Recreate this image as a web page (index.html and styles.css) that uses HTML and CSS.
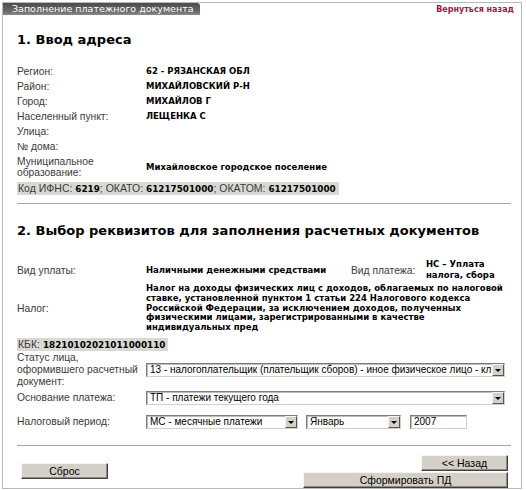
FILE: index.html
```html
<!DOCTYPE html>
<html lang="ru">
<head>
<meta charset="utf-8">
<title>Заполнение платежного документа</title>
<link rel="stylesheet" href="styles.css">
</head>
<body>
<div class="frame">
  <div class="topbar">
    <div class="tab">Заполнение платежного документа</div>
    <a class="back" href="#">Вернуться назад</a>
  </div>
  <div class="content">
    <h2 class="h-first">1. Ввод адреса</h2>
    <div class="addr">
      <div class="lbl">Регион:</div><div class="val">62 - РЯЗАНСКАЯ ОБЛ</div>
      <div class="lbl">Район:</div><div class="val">МИХАЙЛОВСКИЙ Р-Н</div>
      <div class="lbl">Город:</div><div class="val">МИХАЙЛОВ Г</div>
      <div class="lbl">Населенный пункт:</div><div class="val">ЛЕЩЕНКА С</div>
      <div class="lbl">Улица:</div><div class="val"></div>
      <div class="lbl">№ дома:</div><div class="val"></div>
      <div class="lbl multi">Муниципальное<br>образование:</div><div class="val multi-val">Михайловское городское поселение</div>
    </div>
    <div class="codebar">Код ИФНС: <b>6219</b>; ОКАТО: <b>61217501000</b>; ОКАТОМ: <b>61217501000</b></div>
    <div class="rule rule-1"></div>

    <h2 class="h-second">2. Выбор реквизитов для заполнения расчетных документов</h2>
    <div class="pay">
      <div class="lbl">Вид уплаты:</div>
      <div class="val">Наличными денежными средствами</div>
      <div class="lbl">Вид платежа:</div>
      <div class="val two">НС – Уплата<br>налога, сбора</div>
    </div>
    <div class="tax">
      <div class="lbl">Налог:</div>
      <div class="val tax-text">Налог на доходы физических лиц с доходов, облагаемых по налоговой ставке, установленной пунктом 1 статьи 224 Налогового кодекса Российской Федерации, за исключением доходов, полученных физическими лицами, зарегистрированными в качестве индивидуальных пред</div>
    </div>
    <div class="codebar kbk">КБК: <b>18210102021011000110</b></div>

    <div class="form">
      <div class="frow status">
        <div class="lbl three">Статус лица,<br>оформившего расчетный<br>документ:</div>
        <div class="select full"><span class="stext">13 - налогоплательщик (плательщик сборов) - иное физическое лицо - кл</span><span class="arrow"><i></i></span></div>
      </div>
      <div class="frow basis">
        <div class="lbl">Основание платежа:</div>
        <div class="select full"><span class="stext">ТП - платежи текущего года</span><span class="arrow"><i></i></span></div>
      </div>
      <div class="frow period">
        <div class="lbl">Налоговый период:</div>
        <div class="period-ctrls">
          <div class="select s-type"><span class="stext">МС - месячные платежи</span><span class="arrow"><i></i></span></div>
          <div class="select s-month"><span class="stext">Январь</span><span class="arrow"><i></i></span></div>
          <div class="select s-year"><span class="stext">2007</span></div>
        </div>
      </div>
    </div>
    <div class="rule rule-2"></div>

    <div class="actions">
      <div class="btn btn-reset">Сброс</div>
      <div class="right-btns">
        <div class="btn btn-back">&lt;&lt; Назад</div>
        <div class="btn btn-make">Сформировать ПД</div>
      </div>
    </div>
  </div>
</div>
</body>
</html>
```
FILE: styles.css
```css
* { box-sizing: border-box; }
body { margin: 0; background: #fff; font-family: "Liberation Sans", Arial, sans-serif; color: #000; }

.frame {
  margin: 2px 0 0 2px;
  width: 520px;
  height: 487px;
  border: 1px solid #b9b9b9;
}

.topbar { display: flex; justify-content: space-between; align-items: flex-start; height: 12px; }
.tab {
  width: 197px;
  height: 12px;
  padding-left: 9px;
  background: linear-gradient(#4c4c4c, #6a6a6a 70%, #8a8a8a);
  border-top-right-radius: 3px;
  color: #fff;
  font: 9.5px/12px "DejaVu Sans", sans-serif;
  white-space: nowrap;
}
.back {
  margin: 1px 7px 0 0;
  color: #a3184b;
  font: bold 8px/12px "DejaVu Sans", sans-serif;
  text-decoration: none;
}

.content { padding: 0 10px 0 14px; }

h2 { margin: 0; font: bold 13px/16px "DejaVu Sans", sans-serif; color: #000; }
.h-first { margin-top: 17px; }
.h-second { margin-top: 19px; }

.lbl { font-size: 10.3px; color: #3a3a3a; }
.val { font: bold 8.5px "DejaVu Sans", sans-serif; color: #000; }

.addr {
  display: grid;
  grid-template-columns: 129px 1fr;
  align-items: center;
  margin-top: 16px;
  line-height: 15px;
}
.addr .val { line-height: 15px; min-height: 15px; }
.addr .multi { line-height: 11px; padding: 2px 0 3px; }

.codebar {
  display: inline-block;
  height: 13px;
  padding: 0 3px 0 1px;
  margin-top: 1px;
  background: #d9d9d3;
  font-size: 10.5px;
  line-height: 13px;
  color: #3a3a3a;
  vertical-align: top;
}
.codebar b { font: bold 8.8px "DejaVu Sans", sans-serif; color: #000; }

.rule { height: 0; border-top: 1px solid #a6a6a6; }
.rule-1 { margin-top: 4px; }
.rule-2 { margin-top: 16px; }

.pay {
  display: grid;
  grid-template-columns: 129px 205px 75px 1fr;
  align-items: center;
  margin-top: 19px;
  height: 24px;
}
.pay .two { line-height: 11.5px; }

.tax {
  display: grid;
  grid-template-columns: 129px 1fr;
  align-items: center;
  margin-top: 2px;
}
.tax-text { line-height: 9.8px; }

.kbk { margin-top: 5px; }

.form { margin-top: 1px; }
.frow { display: grid; grid-template-columns: 129px 1fr; align-items: center; }
.three { line-height: 12px; }
.basis { margin-top: 3px; }
.period { margin-top: 10px; }

.select {
  display: flex;
  height: 14px;
  background: #fff;
  border: 1px solid;
  border-color: #7b7b7b #d4d0c8 #d4d0c8 #7b7b7b;
  box-shadow: inset 1px 1px 0 #bdbdbd;
  overflow: hidden;
}
.full { width: 359px; }
.stext {
  flex: 1;
  min-width: 0;
  padding-left: 3px;
  font-size: 10px;
  line-height: 12px;
  white-space: nowrap;
  overflow: hidden;
  color: #000;
}
.arrow {
  flex: none;
  width: 12px;
  height: 12px;
  background: #d4d0c8;
  border: 1px solid;
  border-color: #f4f4f4 #555 #555 #f4f4f4;
  display: flex;
  align-items: center;
  justify-content: center;
}
.arrow i {
  width: 0;
  height: 0;
  border-left: 3px solid transparent;
  border-right: 3px solid transparent;
  border-top: 3px solid #000;
  margin-top: 1px;
}

.period-ctrls { display: flex; }
.s-type { width: 152px; }
.s-month { width: 95px; margin-left: 8px; }
.s-year { width: 57px; margin-left: 9px; }

.actions { display: flex; justify-content: space-between; align-items: flex-start; }
.btn {
  height: 16px;
  background: #d4d0c8;
  border: 1px solid;
  border-color: #f4f4f4 #404040 #404040 #f4f4f4;
  box-shadow: inset -1px -1px 0 #8a8a8a;
  font-size: 10.5px;
  line-height: 14px;
  text-align: center;
  color: #000;
}
.btn-reset { width: 87px; margin: 17px 0 0 4px; }
.right-btns { display: flex; flex-direction: column; align-items: flex-end; gap: 1px; margin: 9px 3px 0 0; }
.btn-back { width: 87px; }
.btn-make { width: 205px; }
```
